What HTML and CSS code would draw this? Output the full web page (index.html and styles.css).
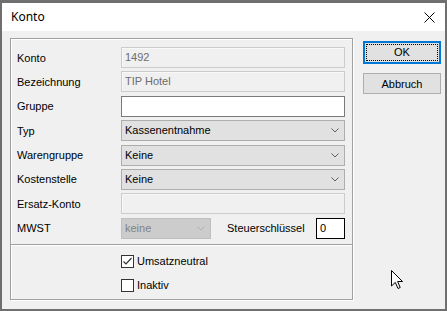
FILE: index.html
```html
<!DOCTYPE html>
<html lang="de">
<head>
  <meta charset="UTF-8">
  <title>Konto</title>
  <link rel="stylesheet" href="styles.css">
</head>
<body>
  <div class="window">
    <div class="titlebar">
      <span class="title">Konto</span>
      <svg class="close" width="11" height="11" viewBox="0 0 11 11">
        <path d="M0.5 0.5 L10.5 10.5 M10.5 0.5 L0.5 10.5" stroke="#000" stroke-width="1"/>
      </svg>
    </div>

    <div class="client">
      <div class="group">
        <div class="fields">
          <label>Konto</label>
          <div class="input disabled">1492</div>

          <label>Bezeichnung</label>
          <div class="input disabled">TIP Hotel</div>

          <label>Gruppe</label>
          <div class="input"></div>

          <label>Typ</label>
          <div class="select">Kassenentnahme<svg class="chev" width="8" height="5" viewBox="0 0 8 5"><path d="M0.5 0.5 L4 4 L7.5 0.5" fill="none" stroke="#606060"/></svg></div>

          <label>Warengruppe</label>
          <div class="select">Keine<svg class="chev" width="8" height="5" viewBox="0 0 8 5"><path d="M0.5 0.5 L4 4 L7.5 0.5" fill="none" stroke="#606060"/></svg></div>

          <label>Kostenstelle</label>
          <div class="select">Keine<svg class="chev" width="8" height="5" viewBox="0 0 8 5"><path d="M0.5 0.5 L4 4 L7.5 0.5" fill="none" stroke="#606060"/></svg></div>

          <label>Ersatz-Konto</label>
          <div class="input disabled"></div>

          <label>MWST</label>
          <div class="mwst-row">
            <div class="select select-disabled">keine<svg class="chev" width="8" height="5" viewBox="0 0 8 5"><path d="M0.5 0.5 L4 4 L7.5 0.5" fill="none" stroke="#b0b0b0"/></svg></div>
            <span class="steuer">Steuerschlüssel</span>
            <div class="input small">0</div>
          </div>
        </div>

        <div class="checks">
          <div class="check">
            <span class="box"><svg width="11" height="11" viewBox="0 0 11 11"><path d="M1.5 5.5 L4 8 L9.5 2" fill="none" stroke="#333" stroke-width="1.2"/></svg></span>
            Umsatzneutral
          </div>
          <div class="check">
            <span class="box"></span>
            Inaktiv
          </div>
        </div>
      </div>

      <div class="buttons">
        <button class="btn default"><span>OK</span></button>
        <button class="btn">Abbruch</button>
      </div>
    </div>

    <svg class="cursor" width="13" height="20" viewBox="0 0 13 20">
      <path d="M0.5 0.5 L0.5 16 L4.3 12.4 L7 18.5 L9.2 17.5 L6.6 11.5 L11.5 11.5 Z" fill="#fff" stroke="#000" stroke-width="1"/>
    </svg>
  </div>
</body>
</html>
```

FILE: styles.css
```css
body {
  margin: 0;
  background-color: #6f6f6f;
  font-family: "Liberation Sans", Arial, sans-serif;
  font-size: 11px;
  color: #000;
  height: 311px;
  overflow: hidden;
}
.window {
  position: relative;
  margin: 3px 2px 0 2px;
  width: 443px;
  height: 306px;
  background-color: #f0f0f0;
}
.titlebar {
  height: 28px;
  background-color: #ffffff;
  display: flex;
  align-items: center;
  justify-content: space-between;
  padding: 0 10px 0 9px;
}
.title {
  font-family: "Noto Sans", "Open Sans", sans-serif;
  font-size: 12px;
  margin-top: -1px;
}
.client {
  display: flex;
  gap: 10px;
  padding: 7px 4px 0 8px;
}
.group {
  width: 343px;
  height: 262px;
  box-sizing: border-box;
  border: 1px solid #a0a0a0;
  box-shadow: inset 1px 1px 0 #ffffff, 1px 1px 0 #ffffff;
  display: flex;
  flex-direction: column;
}
.fields {
  display: grid;
  grid-template-columns: 104px 224px;
  row-gap: 3.4px;
  padding: 8px 0 5px 6px;
}
.fields label {
  align-self: center;
}
.input {
  height: 21px;
  box-sizing: border-box;
  border: 1px solid #7a7a7a;
  background-color: #ffffff;
  padding: 0 3px;
  line-height: 19px;
}
.input.disabled {
  border-color: #cccccc;
  background-color: #f0f0f0;
  color: #6d6d6d;
  box-shadow: inset 1px 1px 0 #f8f8f8;
}
.input.small {
  width: 29px;
  border-color: #000;
  color: #000;
}
.select {
  height: 21px;
  box-sizing: border-box;
  border: 1px solid #adadad;
  background-color: #e1e1e1;
  padding: 0 3px;
  line-height: 19px;
  display: flex;
  align-items: center;
  justify-content: space-between;
}
.chev {
  margin-right: 2px;
}
.select-disabled {
  width: 90px;
  background-color: #cccccc;
  border-color: #bfbfbf;
  color: #838383;
}
.mwst-row {
  display: flex;
  align-items: center;
}
.steuer {
  margin-left: 16px;
  margin-right: auto;
}
.checks {
  flex: 1;
  border-top: 1px solid #a0a0a0;
  box-shadow: inset 0 1px 0 #ffffff;
  display: flex;
  flex-direction: column;
  gap: 11px;
  padding: 10px 0 0 110px;
}
.check {
  display: flex;
  align-items: center;
  gap: 3px;
  height: 13px;
}
.box {
  width: 13px;
  height: 13px;
  box-sizing: border-box;
  border: 1px solid #333333;
  background-color: #ffffff;
  display: flex;
  align-items: center;
  justify-content: center;
}
.buttons {
  display: flex;
  flex-direction: column;
  gap: 9px;
  padding-top: 3px;
}
.btn {
  width: 78px;
  height: 21px;
  border: 1px solid #adadad;
  background-color: #e1e1e1;
  font-family: "Liberation Sans", Arial, sans-serif;
  font-size: 11px;
  padding: 0;
  color: #000;
}
.btn.default {
  height: 23px;
  border: 2px solid #0078d7;
  padding: 1px;
}
.btn.default span {
  display: block;
  height: 100%;
  box-sizing: border-box;
  border: 1px dotted #000;
  line-height: 15px;
}
.cursor {
  position: absolute;
  left: 389px;
  top: 267px;
}
```
